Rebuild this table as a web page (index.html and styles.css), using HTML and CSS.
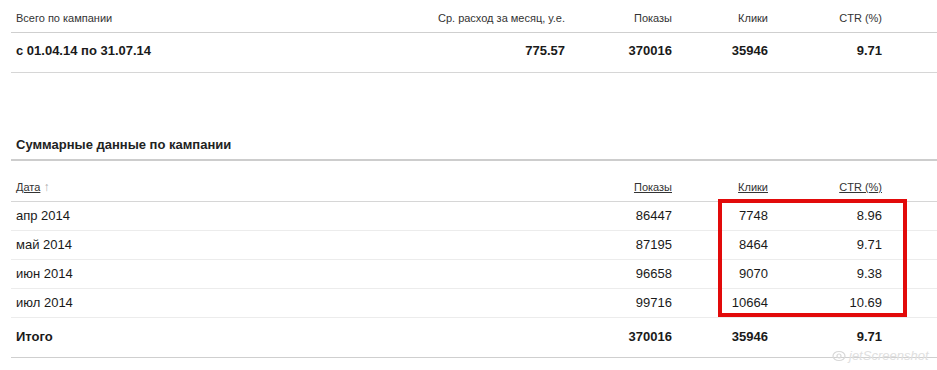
FILE: index.html
```html
<!DOCTYPE html>
<html lang="ru">
<head>
<meta charset="utf-8">
<title>Статистика кампании</title>
<link rel="stylesheet" href="styles.css">
</head>
<body>
<div class="page">
  <div class="summary">
    <div class="grid top-grid head">
      <div class="c-left">Всего по кампании</div>
      <div>Ср. расход за месяц, у.е.</div>
      <div>Показы</div>
      <div>Клики</div>
      <div>CTR (%)</div>
    </div>
    <div class="grid top-grid bold-row">
      <div class="c-left">с 01.04.14 по 31.07.14</div>
      <div>775.57</div>
      <div>370016</div>
      <div>35946</div>
      <div>9.71</div>
    </div>
  </div>

  <div class="details">
    <div class="title">Суммарные данные по кампании</div>
    <div class="grid det-grid head2">
      <div class="c-left"><span class="link">Дата</span> <span class="arrow">↑</span></div>
      <div><span class="link">Показы</span></div>
      <div><span class="link">Клики</span></div>
      <div><span class="link">CTR (%)</span></div>
    </div>
    <div class="grid det-grid row">
      <div class="c-left">апр 2014</div><div>86447</div><div>7748</div><div>8.96</div>
    </div>
    <div class="grid det-grid row">
      <div class="c-left">май 2014</div><div>87195</div><div>8464</div><div>9.71</div>
    </div>
    <div class="grid det-grid row">
      <div class="c-left">июн 2014</div><div>96658</div><div>9070</div><div>9.38</div>
    </div>
    <div class="grid det-grid row">
      <div class="c-left">июл 2014</div><div>99716</div><div>10664</div><div>10.69</div>
    </div>
    <div class="grid det-grid total">
      <div class="c-left">Итого</div><div>370016</div><div>35946</div><div>9.71</div>
    </div>
  </div>

  <div class="highlight"></div>
  <div class="watermark">
    <svg class="wm-icon" width="14" height="12" viewBox="0 0 14 12"><ellipse cx="7" cy="6" rx="6" ry="4.5" fill="none" stroke="#d8d8d8" stroke-width="1.2"/><circle cx="7" cy="6" r="2" fill="none" stroke="#d8d8d8" stroke-width="1.2"/></svg>
    <span>jetScreenshot</span>
  </div>
</div>
</body>
</html>
```
FILE: styles.css
```css
html, body {
  margin: 0;
  padding: 0;
  background: #fff;
}
body {
  font-family: "Liberation Sans", Arial, sans-serif;
  color: #1a1a1a;
}
.page {
  position: relative;
  width: 937px;
  height: 370px;
  overflow: hidden;
}
.summary, .details {
  margin-left: 11px;
}
.grid {
  display: grid;
  padding-right: 55px;
  text-align: right;
}
.top-grid {
  grid-template-columns: 1fr 200px 107px 96px 114px;
}
.det-grid {
  grid-template-columns: 1fr 107px 96px 114px;
}
.c-left {
  text-align: left;
  padding-left: 5px;
}
.head {
  font-size: 11px;
  line-height: 13px;
  color: #333;
  padding: 12px 55px 7px 0;
  border-bottom: 1px solid #cfcfcf;
}
.bold-row {
  font-size: 13px;
  line-height: 16px;
  font-weight: bold;
  padding: 10px 55px 13px 0;
  border-bottom: 1px solid #d6d6d6;
}
.title {
  margin-top: 64px;
  padding-left: 5px;
  font-size: 13px;
  line-height: 16px;
  font-weight: bold;
  color: #222;
  padding-bottom: 6px;
  border-bottom: 2px solid #cdcdcd;
}
.head2 {
  font-size: 11px;
  line-height: 13px;
  color: #333;
  padding: 20px 55px 7px 0;
  border-bottom: 1px solid #d6d6d6;
}
.link {
  text-decoration: underline;
}
.arrow {
  color: #aaa;
  font-size: 12px;
}
.row {
  font-size: 13px;
  line-height: 16px;
  padding: 6px 55px 6px 0;
  border-bottom: 1px solid #ececec;
}
.total {
  font-size: 13px;
  line-height: 16px;
  font-weight: bold;
  padding: 11px 55px 12px 0;
  border-bottom: 1px solid #cfcfcf;
}
.highlight {
  position: absolute;
  left: 718px;
  top: 199px;
  width: 181px;
  height: 110px;
  border: 4px solid #e20a0a;
}
.watermark {
  position: absolute;
  left: 832px;
  top: 348px;
  display: flex;
  align-items: center;
  gap: 3px;
  font-size: 13px;
  font-style: italic;
  color: #e0e0e0;
}
```
